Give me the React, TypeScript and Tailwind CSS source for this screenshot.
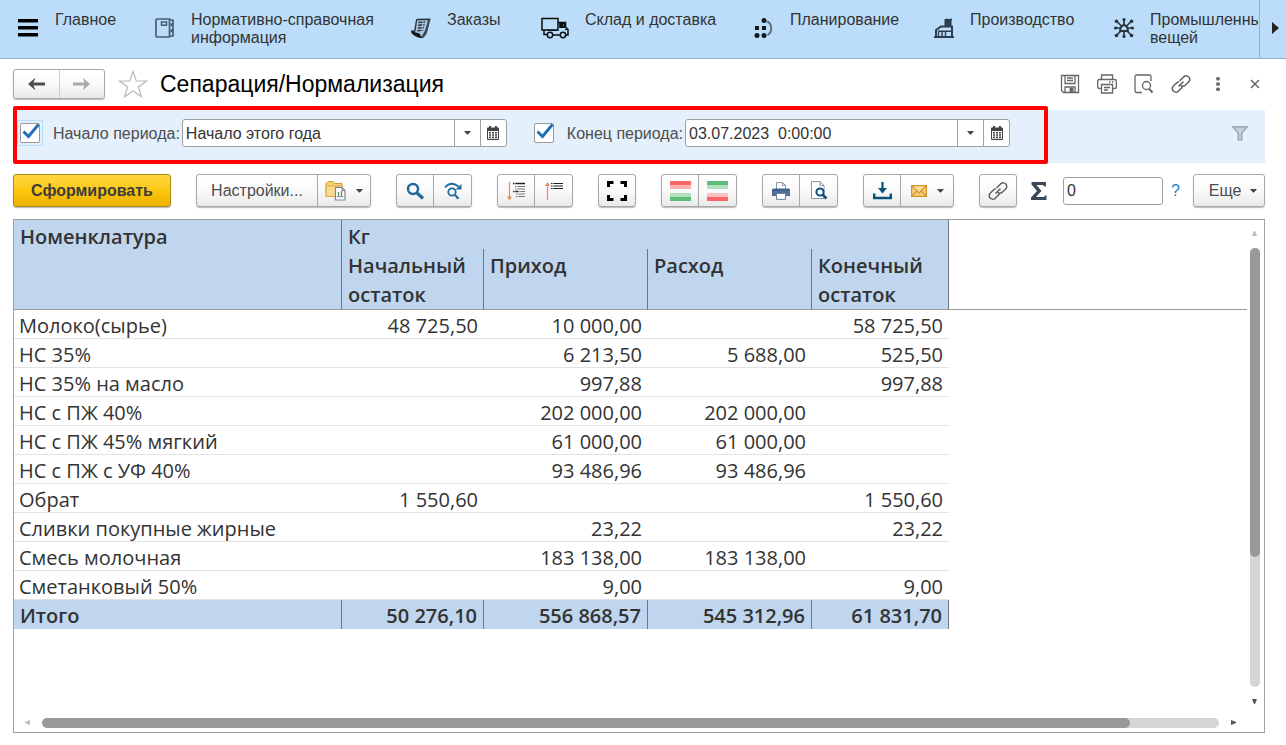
import React from "react";
import type { ReactNode } from "react";

/* ---------- Section bar icons ---------- */

const BookIcon = () => (
  <svg width="20" height="20" viewBox="0 0 20 20" fill="none" stroke="#4a5e70" strokeWidth="1.7">
    <path d="M1 2Q1 1 2 1H14.500V19H2Q1 19 1 18Z" />
    <rect x="6.500" y="4" width="5" height="3.200" strokeWidth="1.500" />
    <path d="M14.500 2H18V6H15.500M15.500 7.500H18V12H15.500M15.500 13.500H18V18H14.500" strokeWidth="1.700" />
  </svg>
);

const OrdersIcon = () => (
  <svg width="20" height="20" viewBox="0 0 20 20">
    <path d="M6 1.500 18.800 1.200C17.500 3.500 17 6 16.500 9 16 13 14 18 11.500 19.300 9 20 3 17.500 1 14.500Q0 12.500 1.500 13L3.500 13.500C5 9 4.500 5 6 1.500Z" fill="#a9c3da" stroke="#28343e" strokeWidth="1.400" strokeLinejoin="round" />
    <path d="M.8 13.300 8.500 15.500Q9.500 18.500 11.500 19.300 5 19.800 1 14.800Z" fill="#14191d" />
    <path d="M18.500 1.500C16.500 5 17 13 11.500 18.500" fill="none" stroke="#3a4954" strokeWidth="2.200" />
    <path d="M7.500 4.500 14 4M7.200 7.300 13.600 6.800M6.800 10 13 9.500M6.300 12.700 12 12.300" stroke="#28343e" strokeWidth="1.400" strokeDasharray="4 1 2" />
  </svg>
);

const TruckIcon = () => (
  <svg width="28" height="22" viewBox="0 0 28 22" fill="none" stroke="#0b0e11" strokeWidth="1.500">
    <path d="M1 1.500H17V13H1ZM3 13V17.500H6M12 18H19.500M24.500 18H27V12.500L24.500 10V5.500H17" />
    <path d="M19 6.500H23.500V10.200H19ZM21.500 6V10" />
    <path d="M19.500 6.800H21V10H19.500Z" fill="#0b0e11" />
    <circle cx="9" cy="18" r="2.700" />
    <circle cx="22" cy="18" r="2.700" />
    <path d="M6 13.500H16M24 12.500H27" strokeWidth="1" />
  </svg>
);

const PlanIcon = () => (
  <svg width="20" height="20" viewBox="0 0 20 20" fill="#15191d">
    <circle cx="10" cy="2.500" r="2.500" />
    <circle cx="3" cy="17.500" r="2.500" />
    <circle cx="10" cy="17.500" r="2.500" />
    <rect x="1" y="8" width="4" height="4" />
    <rect x="8" y="8" width="4" height="4" />
    <path d="M13 3.500C18.500 5.500 18.500 14.500 13.500 17" fill="none" stroke="#5c6c79" strokeWidth="1.900" />
  </svg>
);

const FactoryIcon = () => (
  <svg width="20" height="20" viewBox="0 0 20 20" fill="none" stroke="#2c3e50" strokeWidth="2">
    <path d="M2 19V12L7 8.500H18V19" />
    <path d="M0 19H20" strokeWidth="2" />
    <path d="M10.500 1H17.500V8.500H10.500Z" fill="#2c3e50" stroke="none" />
    <path d="M11 1.500 13 .3 14 1.500 17.500 .3V3H11Z" fill="#2c3e50" stroke="none" />
    <path d="M4.500 18.500V13.200H11.500V18.500M8 13.500V18.500M11.500 13.200H17" strokeWidth="1.400" />
  </svg>
);

const HubIcon = () => (
  <svg width="20" height="20" viewBox="0 0 20 20" fill="#28343e" stroke="#28343e" strokeWidth="1.700">
    <path d="M10 7V1.500M10 13V18.500M7 10H1.500M13 10H18.500M7.500 8 2.800 3.500M12.500 8 17.200 3.500M7.500 12.500 2.800 17M12.500 12.500 17.200 17" />
    <path d="M6 13Q6.500 7.500 10 7 13.500 7.500 14 13Z" fill="#bbddf9" strokeWidth="1.900" />
    <g stroke="none">
      <circle cx="10" cy="1.600" r="1.600" />
      <circle cx="10" cy="18.400" r="1.600" />
      <circle cx="1.600" cy="10" r="1.600" />
      <circle cx="18.400" cy="10" r="1.600" />
      <circle cx="2.500" cy="3.200" r="1.800" />
      <circle cx="17.500" cy="3.200" r="1.800" />
      <circle cx="2.500" cy="17.500" r="1.800" />
      <circle cx="17.500" cy="17.500" r="1.800" />
    </g>
  </svg>
);

/* ---------- Form header icons ---------- */

const ArrowLeft = ({ color }: { color: string }) => (
  <svg width="17" height="12" viewBox="0 0 17 12" fill={color}>
    <path d="M0 6 7 0V1L5.500 4.600H17V7.400H5.500L7 11V12Z" />
  </svg>
);

const StarIcon = () => (
  <svg width="30" height="28" viewBox="0 0 30 28" fill="#fff" stroke="#b4bac0" strokeWidth="1.200">
    <path d="M15 1.500 18.300 11H28.500L20.300 17 23.500 26.800 15 20.800 6.500 26.800 9.700 17 1.500 11H11.700Z" />
  </svg>
);

const SaveIcon = () => (
  <svg width="20" height="20" viewBox="0 0 20 20" fill="none" stroke="#666" strokeWidth="1.300">
    <path d="M1.500 1.500H18.500V18.500H3.500L1.500 16.500Z" />
    <path d="M5 1.500V9.500H15V1.500M7 4H13M7 6.500H13" />
    <path d="M5 18.500V13H15V18.500" />
    <path d="M9.500 14H13.500V18H9.500Z" fill="#666" stroke="none" />
  </svg>
);

const PrinterOutlineIcon = () => (
  <svg width="20" height="20" viewBox="0 0 20 20" fill="none" stroke="#666" strokeWidth="1.300">
    <path d="M4.500 5.500V1H15.500V5.500M4.500 14.500H2.500Q.7 14.500 .7 12.500V7.500Q.7 5.500 2.500 5.500H17.500Q19.300 5.500 19.300 7.500V12.500Q19.300 14.500 17.500 14.500H15.500" />
    <path d="M4.500 10.500H15.500V19H4.500ZM7 13.500H13M7 16H11M12 8H13.500M15 8H16.500" />
  </svg>
);

const PreviewIcon = () => (
  <svg width="20" height="20" viewBox="0 0 20 20" fill="none" stroke="#666" strokeWidth="1.300">
    <path d="M17 7V2.500Q17 1 15.500 1H2.500Q1 1 1 2.500V17Q1 18.500 2.500 18.500H8" />
    <circle cx="12.500" cy="11.500" r="4" />
    <path d="M15.200 14.800 18.500 18.500" strokeWidth="2" />
  </svg>
);

const LinkIcon = () => (
  <svg width="20" height="20" viewBox="0 0 20 20" fill="none" stroke="#606060" strokeWidth="1.500">
    <path d="M8.500 7 12.800 2.700A3.700 3.700 0 0 1 18 3.200 3.500 3.500 0 0 1 17.400 8.200L14 11.500Q11.500 13 9.500 11.200" />
    <path d="M11.500 13 7.200 17.300A3.700 3.700 0 0 1 2 16.800 3.500 3.500 0 0 1 2.600 11.800L6 8.500Q7 7.800 8 8M7.500 12.500 12.500 7.500" />
  </svg>
);

const DotsIcon = () => (
  <svg width="20" height="20" viewBox="0 0 20 20" fill="#707070">
    <rect x="8" y="3" width="4" height="3.600" rx="1.500" />
    <rect x="8" y="8.200" width="4" height="3.600" rx="1.500" />
    <rect x="8" y="13.400" width="4" height="3.600" rx="1.500" />
  </svg>
);

const CloseIcon = () => (
  <svg width="20" height="20" viewBox="0 0 20 20" stroke="#666" strokeWidth="1.500">
    <path d="M6 6 14 14M14 6 6 14" />
  </svg>
);

/* ---------- Field icons ---------- */

const Caret = () => (
  <svg width="7" height="4" viewBox="0 0 7 4" fill="#444">
    <path d="M0 0H7L4 3.500H3Z" />
  </svg>
);

const CalendarIcon = () => (
  <svg width="12" height="14" viewBox="0 0 12 14">
    <path d="M1 1.500H2V0H4V1.500H8V0H10V1.500H11Q12 1.500 12 2.500V13Q12 14 11 14H1Q0 14 0 13V2.500Q0 1.500 1 1.500Z" fill="#444" />
    <path d="M1 5H11V12.800H1Z" fill="#fff" />
    <path d="M2 6H4V7.500H2ZM5 6H7V7.500H5ZM8 6H10V7.500H8ZM2 8.300H4V9.800H2ZM5 8.300H7V9.800H5ZM8 8.300H10V9.800H8ZM2 10.600H4V12H2ZM5 10.600H7V12H5ZM8 10.600H10V12H8Z" fill="#444" />
  </svg>
);

const FunnelIcon = () => (
  <svg width="16" height="15" viewBox="0 0 16 15" fill="#c6ced6" stroke="#8d99a5" strokeWidth="1.200">
    <path d="M.8 .8H15.200L9.800 7.200V14H6.200V7.200Z" />
  </svg>
);

/* ---------- Toolbar icons ---------- */

const FolderReportIcon = () => (
  <svg width="21" height="21" viewBox="0 0 21 21">
    <path d="M1 16V3.500L3 1.500H8L10 3.500H17V6" fill="#f4cf74" stroke="#d29a2e" />
    <path d="M1 16.500V6H17.500V16.500Z" fill="#f9dc8c" stroke="#d9a640" />
    <path d="M10.500 7.500H17L20 10.500V20H10.500Z" fill="#fff" stroke="#74869a" strokeWidth="1.200" />
    <path d="M17 7.500V10.500H20" fill="none" stroke="#74869a" />
    <path d="M13.500 12V16" stroke="#3e9b57" strokeWidth="1.300" />
    <path d="M16.500 11V16" stroke="#e04b3c" strokeWidth="1.300" />
    <path d="M12 16.700H18.500" stroke="#74869a" />
  </svg>
);

const SearchIcon = () => (
  <svg width="18" height="18" viewBox="0 0 18 18" fill="none" stroke="#236a9c">
    <circle cx="7" cy="7" r="5" strokeWidth="2.500" />
    <path d="M11 11 16 15.500" strokeWidth="3.300" strokeLinecap="round" />
  </svg>
);

const SearchNextIcon = () => (
  <svg width="18" height="18" viewBox="0 0 18 18" fill="none" stroke="#236a9c">
    <path d="M1 5.500Q7-1.500 14.500 4.500" strokeWidth="1.800" />
    <path d="M17.500 2V7.500H11.500Z" fill="#236a9c" stroke="none" />
    <circle cx="8" cy="10" r="3.700" strokeWidth="1.800" />
    <path d="M11 13 14.500 16.800" strokeWidth="2.400" />
  </svg>
);

const ExpandIcon = () => (
  <svg width="20" height="20" viewBox="0 0 20 20">
    <path d="M3.500 1V17" stroke="#ee8a58" strokeWidth="1.200" />
    <path d="M1 15.500H6L3.500 19.500Z" fill="#ee8a58" />
    <path d="M7 2.500H19M7 10.500H12" stroke="#222" strokeWidth="1.400" strokeDasharray="1.500 .8 20" />
    <path d="M9 5.500H19M9 8H19M12 10.500H19M10 13H19M10 15.500H19" stroke="#777" strokeWidth="1.200" strokeDasharray="1.500 .8 20" />
  </svg>
);

const CollapseIcon = () => (
  <svg width="20" height="20" viewBox="0 0 20 20">
    <path d="M3.500 3V19" stroke="#ee8a58" strokeWidth="1.200" />
    <path d="M1 5H6L3.500 1Z" fill="#ee8a58" />
    <path d="M7 2.500H19M7 5H19M7 7.500H19" stroke="#222" strokeWidth="1.200" strokeDasharray="1.500 .8 20" />
  </svg>
);

const FullFrameIcon = () => (
  <svg width="20" height="20" viewBox="0 0 20 20" fill="none" stroke="#000" strokeWidth="3">
    <path d="M1.500 6V1.500H6.500M13.500 1.500H18.500V6M18.500 14V18.500H13.500M6.500 18.500H1.500V14" />
  </svg>
);

const StripesIcon = ({ flipped = false }: { flipped?: boolean }) => (
  <svg width="21" height="20" viewBox="0 0 21 20">
    <path d="M0 0H21V4H0Z" fill={flipped ? "#5fbb78" : "#fb6565"} />
    <path d="M0 4H21V8H0Z" fill={flipped ? "#b2dfbd" : "#fdb0b0"} />
    <path d="M0 12H21V16H0Z" fill={flipped ? "#fdc1c1" : "#b2dfbd"} />
    <path d="M0 16H21V20H0Z" fill={flipped ? "#fb6565" : "#5fbb78"} />
  </svg>
);

const PrinterIcon = () => (
  <svg width="18" height="18" viewBox="0 0 18 18">
    <path d="M4.500 7V.6H10.500L13.500 3.500V7" fill="#fff" stroke="#8595a8" />
    <path d="M10.500 .6V3.500H13.500" fill="none" stroke="#8595a8" />
    <path d="M1 6.500H17L18 8V14H0V8Z" fill="#4f7097" />
    <path d="M0 8H18" stroke="#34557c" />
    <path d="M4.500 11.500H13.500V17.400H4.500Z" fill="#fff" stroke="#6d8098" />
  </svg>
);

const PagePreviewIcon = () => (
  <svg width="18" height="19" viewBox="0 0 18 19" fill="none">
    <path d="M1.500 .6H10L14 4.500V17.500H1.500Z" fill="#fff" stroke="#8595a8" />
    <path d="M10 .6V4.500H14" stroke="#8595a8" />
    <circle cx="10" cy="11" r="3.600" fill="#fff" stroke="#0c4f82" strokeWidth="2" />
    <path d="M12.800 13.800 16.500 17.500" stroke="#0c4f82" strokeWidth="2.600" />
  </svg>
);

const DownloadIcon = () => (
  <svg width="19" height="18" viewBox="0 0 19 18" fill="none" stroke="#06527f">
    <path d="M9.500 0V7" strokeWidth="2.200" />
    <path d="M5 6H14L9.500 11.500Z" fill="#06527f" stroke="none" />
    <path d="M1.200 11.500V16H17.800V11.500" strokeWidth="2.400" />
  </svg>
);

const MailIcon = () => (
  <svg width="16" height="12" viewBox="0 0 16 12" stroke="#cf922e" strokeWidth="1.200">
    <path d="M.6 .6H15.400V11.400H.6Z" fill="#f6cf7e" />
    <path d="M.6 11.400 6 5.800M15.400 11.400 10 5.800" fill="none" />
    <path d="M.6 .6 8 8 15.400 .6Z" fill="#fbdf9f" />
  </svg>
);

const SigmaIcon = () => (
  <svg width="16" height="18" viewBox="0 0 16 18" fill="#3a4a5a">
    <path d="M.5 0H15V4.500H13.500Q13 3 11.500 3H5.500L10.500 9 5 15H12Q13.500 15 14 13.500H15.500V18H0V15.500L6 9 .5 2.500Z" />
  </svg>
);

/* ---------- Controls ---------- */

const raised = "border border-[#a8a8a8] bg-linear-to-b from-white via-[#fafafa] to-[#e9e9e9] shadow-[0_1px_1px_#bbbbbb]";

function ButtonGroup({ children }: { children: ReactNode }) {
  return <div className={`flex h-[33px] shrink-0 divide-x divide-[#a8a8a8] overflow-hidden rounded-[3px] ${raised}`}>{children}</div>;
}

function IconButton({ label, wide = false, children }: { label: string; wide?: boolean; children: ReactNode }) {
  return (
    <button
      type="button"
      aria-label={label}
      className={`flex items-center justify-center ${wide ? "w-[52px] gap-[10px]" : "w-[37px] only:w-[36px]"}`}
    >
      {children}
    </button>
  );
}

function PeriodField({ id, label, value, focused = false }: { id: string; label: string; value: string; focused?: boolean }) {
  return (
    <div className="flex items-center">
      <span className={`relative flex h-[26px] w-[26px] items-center justify-center border ${focused ? "border-[#b9dcf7]" : "border-transparent"}`}>
        <input
          type="checkbox"
          defaultChecked
          aria-label={label}
          className="peer h-5 w-5 appearance-none rounded-[2px] border border-[#9a9a9a] bg-white"
        />
        <svg className="pointer-events-none absolute top-[2px] left-1 hidden peer-checked:block" width="18" height="17" viewBox="0 0 18 17" fill="none">
          <path d="M1.500 8.500 6.500 13.500 16.500 1.500" stroke="#2470b8" strokeWidth="3" />
        </svg>
      </span>
      <label htmlFor={id} className="shrink-0 pt-[2px] pr-[2px] pl-[10px] whitespace-nowrap text-[#4d4d4d]">
        {label}
      </label>
      <div className="flex h-[28px] w-[325px] divide-x divide-[#a0a0a0] overflow-hidden rounded-[3px] border border-[#a0a0a0] bg-white">
        <input id={id} type="text" defaultValue={value} className="min-w-0 flex-1 px-[3px] pt-[2px] text-[#333] outline-none" />
        <button type="button" aria-label="Выбрать из списка" className="flex w-[26px] items-center justify-center">
          <Caret />
        </button>
        <button type="button" aria-label="Календарь" className="flex w-[25px] items-center justify-center">
          <CalendarIcon />
        </button>
      </div>
    </div>
  );
}

/* ---------- Data ---------- */

const sections: { title: ReactNode; width: string; icon?: ReactNode }[] = [
  { title: "Главное", width: "w-[100px]" },
  { title: <>Нормативно-справочная<br />информация</>, width: "w-[256px]", icon: <BookIcon /> },
  { title: "Заказы", width: "w-[130px]", icon: <OrdersIcon /> },
  { title: "Склад и доставка", width: "w-[213px]", icon: <TruckIcon /> },
  { title: "Планирование", width: "w-[180px]", icon: <PlanIcon /> },
  { title: "Производство", width: "w-[180px]", icon: <FactoryIcon /> },
  { title: <>Промышленны<br />вещей</>, width: "w-[180px]", icon: <HubIcon /> },
];

const rows: [string, string, string, string, string][] = [
  ["Молоко(сырье)", "48 725,50", "10 000,00", "", "58 725,50"],
  ["НС 35%", "", "6 213,50", "5 688,00", "525,50"],
  ["НС 35% на масло", "", "997,88", "", "997,88"],
  ["НС с ПЖ 40%", "", "202 000,00", "202 000,00", ""],
  ["НС с ПЖ 45% мягкий", "", "61 000,00", "61 000,00", ""],
  ["НС с ПЖ с УФ 40%", "", "93 486,96", "93 486,96", ""],
  ["Обрат", "1 550,60", "", "", "1 550,60"],
  ["Сливки покупные жирные", "", "23,22", "", "23,22"],
  ["Смесь молочная", "", "183 138,00", "183 138,00", ""],
  ["Сметанковый 50%", "", "9,00", "", "9,00"],
];

const totals = ["50 276,10", "556 868,57", "545 312,96", "61 831,70"];

function ReportTable() {
  const head = "border-r border-[#70767c] bg-[#bfd6ee] px-[6px] text-left align-top font-semibold";
  return (
    <table className="w-full table-fixed border-separate border-spacing-0 font-['Open_Sans','Noto_Sans',sans-serif] text-[20px] text-[#333]">
      <colgroup>
        <col className="w-[328px]" />
        <col className="w-[142px]" />
        <col className="w-[164px]" />
        <col className="w-[164px]" />
        <col className="w-[137px]" />
        <col />
      </colgroup>
      <thead>
        <tr className="h-[29px] leading-[25px]">
          <th rowSpan={2} scope="col" className={`${head} border-b border-b-[#999] pt-1`}>Номенклатура</th>
          <th colSpan={4} scope="colgroup" className={`${head} pt-1`}>Кг</th>
          <td rowSpan={2} className="border-b border-[#999]" />
        </tr>
        <tr className="h-[61px] leading-[29px]">
          {["Начальный остаток", "Приход", "Расход", "Конечный остаток"].map((name) => (
            <th key={name} scope="col" className={`${head} border-b border-b-[#999] pt-[2px]`}>{name}</th>
          ))}
        </tr>
      </thead>
      <tbody className="leading-[24px]">
        {rows.map(([name, ...values]) => (
          <tr key={name}>
            <td className="h-[29px] border-b border-[#e2e2e2] px-[5px] pt-1 whitespace-nowrap">{name}</td>
            {values.map((value, i) => (
              <td key={i} className="border-b border-[#e2e2e2] px-[6px] pt-1 text-right whitespace-nowrap">{value}</td>
            ))}
            <td />
          </tr>
        ))}
      </tbody>
      <tfoot className="leading-[27px] font-semibold">
        <tr>
          <th scope="row" className={`${head} pt-[2px]`}>Итого</th>
          {totals.map((value) => (
            <td key={value} className="border-r border-[#70767c] bg-[#bfd6ee] px-[6px] pt-[2px] text-right whitespace-nowrap">{value}</td>
          ))}
          <td />
        </tr>
      </tfoot>
    </table>
  );
}

export default function App() {
  return (
    <div className="flex min-h-screen flex-col bg-white font-['Liberation_Sans',Arial,sans-serif] text-[16px] leading-[18px] text-[#333]">
      <nav className="flex h-[59px] border-b border-[#92b1cd] bg-[#bbddf9]">
        <button type="button" aria-label="Меню" className="w-[55px] shrink-0 pb-[2px] pl-[18px]">
          <svg width="20" height="18" viewBox="0 0 20 18" fill="#000">
            <path d="M0 0H20V3.500H0ZM0 7H20V10.500H0ZM0 14H20V17.500H0Z" />
          </svg>
        </button>
        <div className="flex min-w-0 flex-1 overflow-hidden">
          {sections.map((section, i) => (
            <a key={i} href="#" className={`flex shrink-0 gap-4 ${section.width}`}>
              {section.icon && <span className="self-center pb-[2px]">{section.icon}</span>}
              <span className="pt-[11px] whitespace-nowrap">{section.title}</span>
            </a>
          ))}
        </div>
        <button type="button" aria-label="Вперед" className="flex w-[27px] shrink-0 items-center justify-center border-l border-[#92b1cd] pb-[2px] pl-[5px]">
          <svg width="7" height="12" viewBox="0 0 7 12" fill="#222"><path d="M0 0 7 6 0 12Z" /></svg>
        </button>
      </nav>

      <header className="flex h-[51px] items-center pr-[21px] pb-[2px] pl-[13px]">
        <div className={`flex h-[30px] w-[92px] shrink-0 divide-x divide-[#cccccc] rounded-[3px] ${raised}`}>
          <button type="button" aria-label="Назад" className="flex flex-1 items-center justify-center"><ArrowLeft color="#4d4d4d" /></button>
          <button type="button" aria-label="Далее" className="flex flex-1 items-center justify-center">
            <span className="rotate-180"><ArrowLeft color="#aaaaaa" /></span>
          </button>
        </div>
        <button type="button" aria-label="В избранное" className="ml-[13px]"><StarIcon /></button>
        <h1 className="ml-3 flex-1 text-[23px] leading-[30px] whitespace-nowrap text-black">Сепарация/Нормализация</h1>
        <div className="flex items-center gap-[17px]">
          <button type="button" aria-label="Сохранить"><SaveIcon /></button>
          <button type="button" aria-label="Печать"><PrinterOutlineIcon /></button>
          <button type="button" aria-label="Предварительный просмотр"><PreviewIcon /></button>
          <button type="button" aria-label="Получить ссылку"><LinkIcon /></button>
          <button type="button" aria-label="Дополнительно"><DotsIcon /></button>
          <button type="button" aria-label="Закрыть"><CloseIcon /></button>
        </div>
      </header>

      <main className="mr-[21px] mb-3 ml-[13px] flex flex-1 flex-col">
        <section className="relative flex h-[53px] items-center bg-[#e4f0fc] pr-[17px] pb-[7px] pl-1">
          <div className="flex gap-6">
            <PeriodField id="period-start" label="Начало периода:" value="Начало этого года" focused />
            <PeriodField id="period-end" label="Конец периода:" value="03.07.2023  0:00:00" />
          </div>
          <button type="button" aria-label="Отбор" className="ml-auto"><FunnelIcon /></button>
          <div className="pointer-events-none absolute -top-1 left-0 h-[58px] w-[1035px] rounded-[2px] border-4 border-[#ff0000]" />
        </section>

        <div className="flex items-center pt-[11px] pb-3">
          <div className="flex items-center gap-[25px]">
            <button type="button" className="h-[33px] w-[158px] rounded-[3px] border border-[#a98a1c] bg-linear-to-b from-[#ffd740] via-[#fcc70d] to-[#ecb000] font-bold text-[#3d3d3d] shadow-[0_1px_1px_#bbbbbb]">
              Сформировать
            </button>
            <ButtonGroup>
              <button type="button" className="w-[121px] text-[#4d4d4d]">Настройки...</button>
              <IconButton label="Варианты отчета" wide><FolderReportIcon /><Caret /></IconButton>
            </ButtonGroup>
            <ButtonGroup>
              <IconButton label="Найти"><SearchIcon /></IconButton>
              <IconButton label="Найти далее"><SearchNextIcon /></IconButton>
            </ButtonGroup>
            <ButtonGroup>
              <IconButton label="Развернуть группы"><ExpandIcon /></IconButton>
              <IconButton label="Свернуть группы"><CollapseIcon /></IconButton>
            </ButtonGroup>
            <ButtonGroup>
              <IconButton label="Во весь экран"><FullFrameIcon /></IconButton>
            </ButtonGroup>
            <ButtonGroup>
              <IconButton label="Красный-зеленый"><StripesIcon /></IconButton>
              <IconButton label="Зеленый-красный"><StripesIcon flipped /></IconButton>
            </ButtonGroup>
            <ButtonGroup>
              <IconButton label="Печать отчета"><PrinterIcon /></IconButton>
              <IconButton label="Просмотр отчета"><PagePreviewIcon /></IconButton>
            </ButtonGroup>
            <ButtonGroup>
              <IconButton label="Сохранить в файл"><DownloadIcon /></IconButton>
              <IconButton label="Отправить по почте" wide><MailIcon /><Caret /></IconButton>
            </ButtonGroup>
            <ButtonGroup>
              <IconButton label="Ссылка"><LinkIcon /></IconButton>
            </ButtonGroup>
          </div>
          <label htmlFor="sum" aria-label="Сумма" className="mr-4 ml-[14px] shrink-0"><SigmaIcon /></label>
          <input id="sum" type="text" defaultValue="0" className="h-[28px] w-[100px] rounded-[3px] border border-[#a0a0a0] px-[3px] text-[#333] outline-none" />
          <button type="button" className="ml-2 text-[#1583c4]">?</button>
          <button type="button" className={`ml-auto flex h-[33px] w-[72px] items-center justify-center gap-[9px] rounded-[3px] pl-2 text-[#4d4d4d] ${raised}`}>
            Еще <Caret />
          </button>
        </div>

        <section className="flex flex-1 flex-col border border-[#a0a0a0]">
          <div className="flex flex-1">
            <div className="min-w-0 flex-1"><ReportTable /></div>
            <div className="flex w-[17px] flex-col items-center pt-[11px] pr-[2px]">
              <svg width="5" height="5" viewBox="0 0 5 5" fill="#bbb"><path d="M2 0H3L5 5H0Z" /></svg>
              <div className="mt-3 w-[10px] flex-1 rounded-full bg-[#d5d5d5]">
                <div className="h-[309px] rounded-full bg-[#999]" />
              </div>
              <svg className="mt-3" width="5" height="5" viewBox="0 0 5 5" fill="#555"><path d="M0 0H5L3 5H2Z" /></svg>
            </div>
          </div>
          <div className="flex h-[28px] items-center pt-[9px] pr-[28px] pl-[11px]">
            <svg width="5" height="5" viewBox="0 0 5 5" fill="#bbb"><path d="M5 0V5L0 3V2Z" /></svg>
            <div className="mx-3 h-[10px] flex-1 rounded-full bg-[#d5d5d5]">
              <div className="h-full w-[92.4%] rounded-full bg-[#999]" />
            </div>
            <svg width="5" height="5" viewBox="0 0 5 5" fill="#555"><path d="M0 0V5L5 3V2Z" /></svg>
          </div>
        </section>
      </main>
    </div>
  );
}
